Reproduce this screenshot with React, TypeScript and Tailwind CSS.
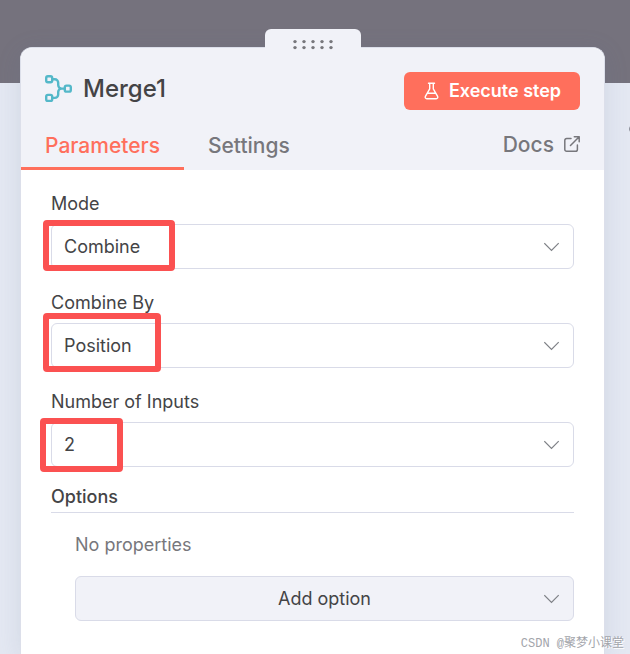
import { useState } from 'react';
import type { ReactNode } from 'react';

interface FieldProps {
  id: string;
  label: string;
  options: string[];
  initial: string;
  children?: ReactNode;
}

function Chevron() {
  return (
    <svg className="pointer-events-none absolute top-1/2 right-3.5 h-2.5 w-4 -translate-y-1/2 text-[#7e8186]" viewBox="0 0 16 10" fill="none" stroke="currentColor" strokeWidth="1.2" aria-hidden="true">
      <path d="M0.3 1.2 7.5 8.5 14.7 1.2" />
    </svg>
  );
}

function MergeIcon() {
  return (
    <svg className="h-7 w-7 text-[#54b8c9]" viewBox="0 0 28 28" fill="none" stroke="currentColor" strokeWidth="2.4" aria-hidden="true">
      <rect x="1.2" y="1.3" width="6" height="6" rx="1.7" />
      <rect x="1.2" y="19.9" width="6" height="6" rx="1.7" />
      <rect x="19.8" y="10.6" width="6" height="6" rx="1.7" />
      <path d="M7.2 4.3h2.6a3.4 3.4 0 0 1 3.4 3.4v2.4a3.5 3.5 0 0 0 3.5 3.5h3.1M7.2 22.9h2.6a3.4 3.4 0 0 0 3.4-3.4v-2.4a3.5 3.5 0 0 1 3.5-3.5" />
    </svg>
  );
}

function FlaskIcon() {
  return (
    <svg className="h-[18px] w-4" viewBox="0 0 16 18" fill="none" stroke="currentColor" strokeWidth="1.4" strokeLinecap="round" strokeLinejoin="round" aria-hidden="true">
      <path d="M5.5 1.2h6M6.7 1.2v5.6L2.4 14.4A1.6 1.6 0 0 0 3.8 16.8h9.4a1.6 1.6 0 0 0 1.4-2.4L10.3 6.8V1.2M4.7 11.3h7.6" />
    </svg>
  );
}

function ExternalIcon() {
  return (
    <svg className="mb-0.5 h-4 w-4" viewBox="0 0 16 16" fill="none" stroke="currentColor" strokeWidth="1.5" strokeLinecap="round" strokeLinejoin="round" aria-hidden="true">
      <path d="M7 2.6H2.6A1.8 1.8 0 0 0 0.8 4.4v9a1.8 1.8 0 0 0 1.8 1.8h9a1.8 1.8 0 0 0 1.8-1.8V9M10.3 0.8h4.9v4.9M15.2 0.8 6.5 9.5" />
    </svg>
  );
}

function Field({ id, label, options, initial, children }: FieldProps) {
  const [value, setValue] = useState(initial);

  return (
    <div>
      <label htmlFor={id} className="block h-[30px] text-lg leading-5">{label}</label>
      <div className="relative">
        <select id={id} value={value} onChange={e => setValue(e.target.value)}
          className="block h-[45px] w-full appearance-none rounded-md border border-[#d9dbe8] bg-white px-3 text-lg">
          {options.map(o => <option key={o}>{o}</option>)}
        </select>
        <Chevron />
        {children}
      </div>
    </div>
  );
}

export default function App() {
  const [tab, setTab] = useState('Parameters');

  return (
    <div className="relative flex min-h-screen flex-col overflow-hidden bg-[linear-gradient(#75727d_83px,#e4e8f2_83px)] pt-[29px] pr-[25px] pl-5 font-['Inter','Noto_Sans_CJK_SC',sans-serif] text-[#444446]">
      {/* handle overlaps the card so the lower row of dots stays visible */}
      <button aria-label="Drag panel" className="relative z-10 -mb-1.5 flex h-6 w-24 items-start justify-center self-center rounded-t-md bg-[#f1f2f8] pt-2.5">
        <svg className="h-3 w-10 text-[#77777c]" viewBox="0 0 40 12" fill="currentColor" aria-hidden="true">
          {[2, 11, 20, 29, 38].map(x => (
            <g key={x}>
              <circle cx={x} cy="2.6" r="1.7" />
              <circle cx={x} cy="8.6" r="1.7" />
            </g>
          ))}
        </svg>
      </button>

      <main className="flex-1 rounded-t-xl border border-b-0 border-[#dcdfea] bg-white shadow-[0_4px_24px_rgba(90,110,150,0.14)]">
        <header className="rounded-t-xl bg-[#f1f2f8]">
          <div className="flex items-start justify-between px-6 pt-6">
            <h1 className="flex items-center gap-2.5 text-2xl leading-[34px] font-medium">
              <MergeIcon />
              Merge1
            </h1>
            <button className="flex h-[38px] w-44 items-center justify-center gap-2.5 rounded-md bg-[#ff6f5c] text-lg font-semibold text-white">
              <FlaskIcon />
              Execute step
            </button>
          </div>
          <nav className="flex h-[60px] items-stretch pr-6 text-[21px] leading-8 font-medium text-[#77777c]">
            {['Parameters', 'Settings'].map(name => (
              <button key={name} onClick={() => setTab(name)}
                className={`border-b-3 px-6 pt-5 pb-2 ${tab === name ? 'border-[#ff6f5c] text-[#ff6f5c]' : 'border-transparent'}`}>
                {name}
              </button>
            ))}
            <a href="#docs" className="ml-auto flex items-center gap-2.5 pt-2.5">
              Docs
              <ExternalIcon />
            </a>
          </nav>
        </header>

        <div className="px-[30px] pt-6">
          <div className="flex flex-col gap-6">
            <Field id="mode" label="Mode" initial="Combine" options={['Append', 'Combine', 'SQL Query', 'Choose Branch']}>
              <div className="pointer-events-none absolute -top-1 -left-2 h-[51px] w-[132px] rounded-sm border-6 border-[#fb5151]" />
            </Field>
            <Field id="combine-by" label="Combine By" initial="Position" options={['Matching Fields', 'Position', 'All Possible Combinations']}>
              <div className="pointer-events-none absolute -top-2.5 -left-2 h-[59px] w-[118px] rounded-sm border-6 border-[#fb5151]" />
            </Field>
            <Field id="inputs" label="Number of Inputs" initial="2" options={['2', '3', '4', '5']}>
              <div className="pointer-events-none absolute -top-1 -left-[11px] h-[54px] w-[83px] rounded-sm border-6 border-[#fb5151]" />
            </Field>
          </div>

          <section className="pt-5">
            <h2 className="border-b border-[#d9dbe8] pb-[5px] text-lg leading-5 font-medium">Options</h2>
            <div className="pt-5 pl-6">
              <p className="text-lg leading-6 text-[#77777c]">No properties</p>
              <div className="relative mt-[19px]">
                <select aria-label="Add option" defaultValue="Add option"
                  className="block h-[45px] w-full appearance-none rounded-md border border-[#d9dbe8] bg-[#f1f2f8] px-3 text-center text-lg">
                  <option>Add option</option>
                  <option>Include Any Unpaired Items</option>
                </select>
                <Chevron />
              </div>
            </div>
          </section>
        </div>
      </main>

      <div className="absolute top-[124px] -right-[9px] h-2.5 w-2.5 rounded-full border border-[#8b8e98]" />
      <span className="absolute right-1.5 bottom-0.5 font-['Liberation_Mono','Noto_Sans_CJK_SC',monospace] text-xs leading-4 text-[#a3a5ab] [text-shadow:1px_1px_0_#ffffff]">CSDN @聚梦小课堂</span>
    </div>
  );
}
